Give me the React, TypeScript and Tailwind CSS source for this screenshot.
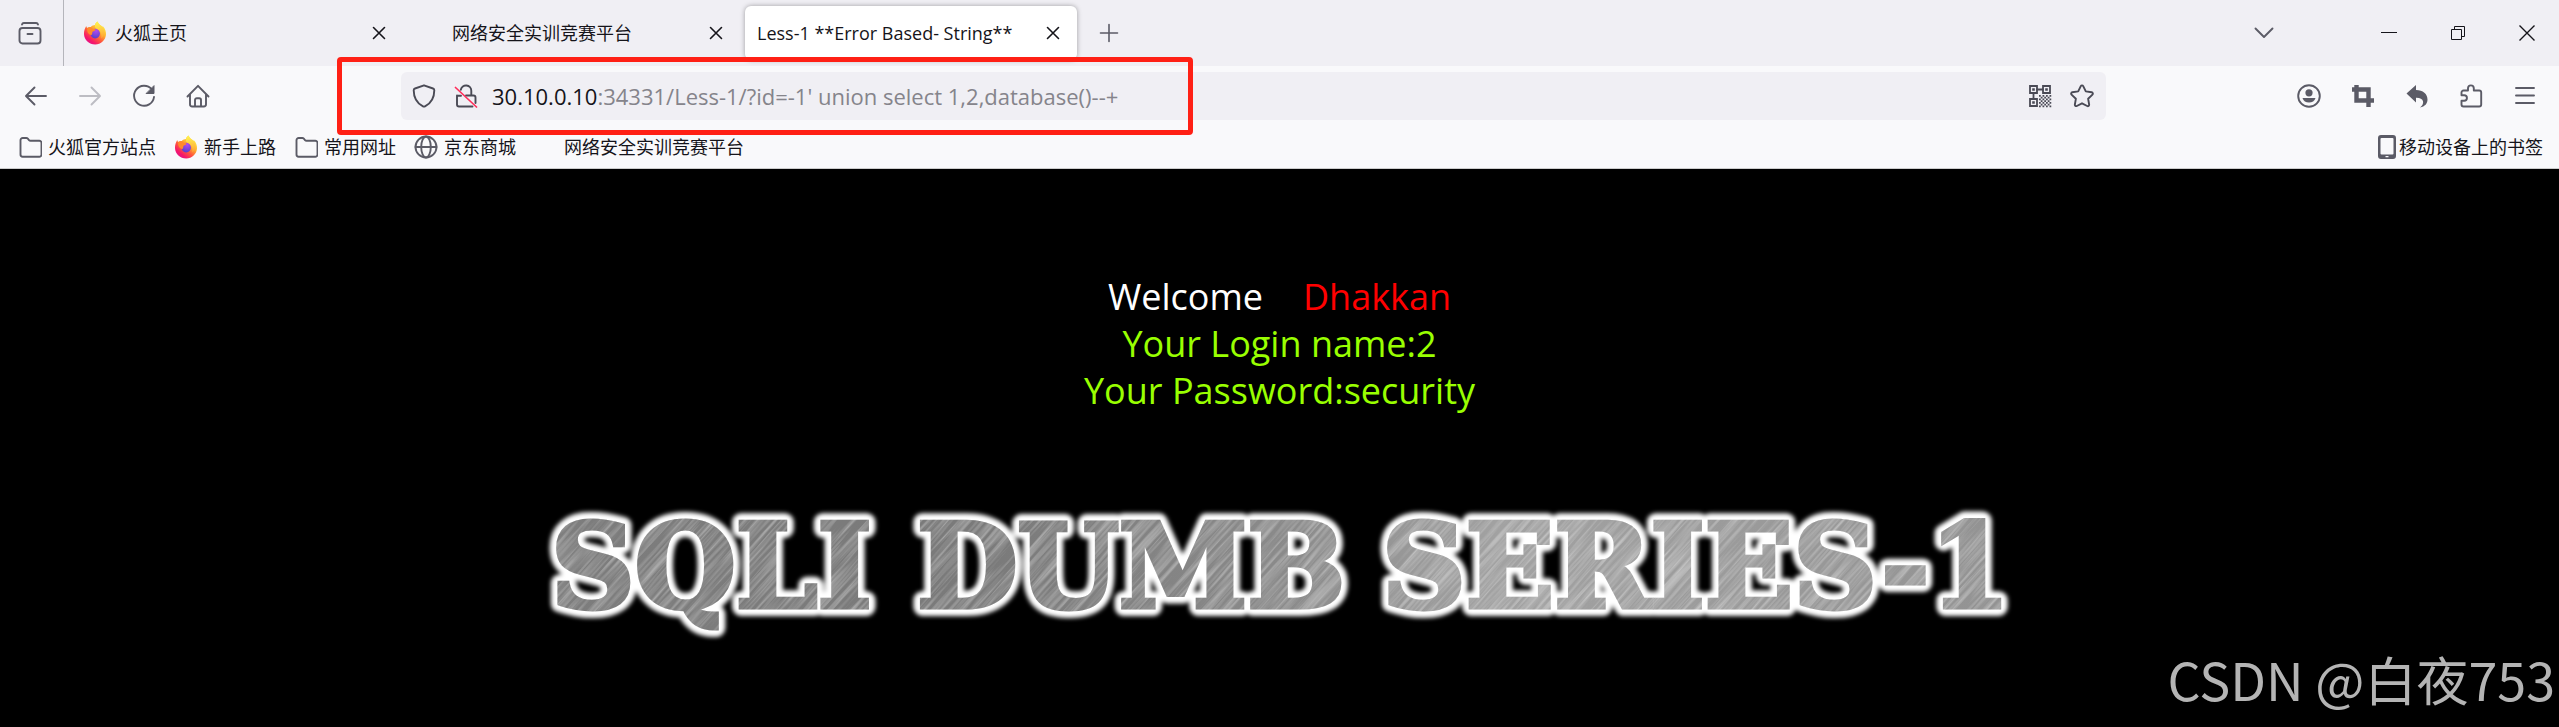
import { ReactNode } from 'react';

// Wrapper for the 24px line icons of the browser chrome
interface IconProps {
    children: ReactNode;
    className?: string;
}

const Icon: React.FC<IconProps> = ({ children, className = 'text-[#5b5b66]' }) => (
    <svg
        viewBox="0 0 24 24"
        className={`size-6 shrink-0 ${className}`}
        fill="none"
        stroke="currentColor"
        strokeWidth="1.9"
        strokeLinecap="round"
        strokeLinejoin="round"
        aria-hidden="true"
    >
        {children}
    </svg>
);

const FirefoxLogo = () => (
    <svg viewBox="0 0 24 24" className="size-6 shrink-0" aria-hidden="true">
        <defs>
            <linearGradient id="fx-body" x1="0.85" y1="0.1" x2="0.2" y2="0.95">
                <stop offset="0" stopColor="#fff04a" />
                <stop offset="0.35" stopColor="#ffb02e" />
                <stop offset="0.6" stopColor="#ff5a3c" />
                <stop offset="0.85" stopColor="#f5156c" />
                <stop offset="1" stopColor="#e31587" />
            </linearGradient>
            <linearGradient id="fx-flame" x1="0.5" y1="0" x2="0.6" y2="1">
                <stop offset="0" stopColor="#fff44f" />
                <stop offset="1" stopColor="#ffa436" />
            </linearGradient>
            <radialGradient id="fx-globe" cx="0.6" cy="0.2" r="0.9">
                <stop offset="0" stopColor="#b24bf0" />
                <stop offset="1" stopColor="#4a3fc8" />
            </radialGradient>
        </defs>
        <path
            fill="url(#fx-body)"
            d="M3.2 5.1c.3 1 .6 1.500 1 1.900C5.200 6.300 6.500 5.900 7.800 6 9 4.600 10.500 4.200 12 4.100c.2-1.600 1.200-3 2.600-3.700.5 1.900 2.100 3 3.600 4.400.4.400.8.800 1.100 1.200l.4-1c2.600 2.400 3.500 5.800 3.300 8.600C22.600 19.200 18 23.500 12.200 23.500 6.200 23.500 1.200 19 1 13c-.1-2.900.8-5.400 2.200-7.900z"
        />
        <circle cx="12.200" cy="12.600" r="4.800" fill="url(#fx-globe)" />
        <path
            fill="url(#fx-flame)"
            d="M12.100 4.100C12.200 2.500 13.200 1.100 14.600.4c.5 1.900 2.100 3 3.600 4.400 2 1.900 3 4.500 2.700 7.600-.3 2.300-1.300 4-2.700 5 .6-2.900.3-5.600-1.500-7.500-1.200-1.300-2.800-1.800-4.100-2.900-.7-.7-.8-1.700-.5-2.900z"
        />
        <path fill="#ff8a2b" d="M4.200 7.100C6 6 8.200 6 9.600 7.800c1.200.1 2.300.2 3 .6-.2 1.300-1.800 1.700-3 2.300-.7 1 .2 2.600-1.400 3.400-2.800-.6-4.600-3.400-4-7z" />
    </svg>
);

const FolderIcon = () => (
    <Icon>
        <path d="M2.500 19.500V5.200A2.200 2.200 0 0 1 4.700 3h3.600a2 2 0 0 1 1.500.7l1.200 1.400a2 2 0 0 0 1.500.7h8.800a2.200 2.200 0 0 1 2.200 2.200v11.500a2.200 2.200 0 0 1-2.200 2.200H4.700a2.200 2.200 0 0 1-2.200-2.200z" />
    </Icon>
);

const GlobeIcon = () => (
    <Icon>
        <circle cx="12" cy="12" r="10.500" />
        <ellipse cx="12" cy="12" rx="4.800" ry="10.500" />
        <path d="M1.500 12h21" />
    </Icon>
);

// Small 7x7 raster for the lower right part of the QR icon
const qrCells = ['1010101', '0101010', '1010101', '0101010', '1010101', '0101010', '1010101'];

const QrIcon = () => (
    <Icon className="text-[#4a4a55]">
        <g strokeLinejoin="miter" strokeWidth="1.800">
            <path d="M2 2h7v7H2zM15 2h7v7h-7zM2 15h7v7H2z" />
            <path d="M9 5.500h6M5.500 9v6" />
        </g>
        <g fill="currentColor" stroke="none">
            <path d="M4.200 4.200h2.600v2.600H4.200zM17.200 4.200h2.600v2.600h-2.600zM4.200 17.200h2.600v2.600H4.200z" />
            {qrCells.map((row, y) =>
                row.split('').map((cell, x) =>
                    cell === '1' ? <rect key={`${x}-${y}`} x={11 + x * 1.75} y={11 + y * 1.75} width="1.75" height="1.75" /> : null
                )
            )}
        </g>
    </Icon>
);

const CloseGlyph = () => (
    <Icon className="text-[#15141a]">
        <path d="M6.500 6.500l11 11M17.500 6.500l-11 11" strokeWidth="1.600" />
    </Icon>
);

interface TabProps {
    title: string;
    icon?: ReactNode;
    active?: boolean;
}

const Tab: React.FC<TabProps> = ({ title, icon, active }) => (
    <div
        className={`flex h-[54px] w-[332px] shrink-0 items-center rounded-md px-3 ${
            active ? 'bg-white shadow-[0_0_5px_rgba(0,0,0,0.35)]' : ''
        }`}
    >
        {icon && <span className="mr-2 size-6 shrink-0">{icon}</span>}
        <button className="min-w-0 flex-1 truncate text-left">{title}</button>
        <button aria-label={`关闭 ${title}`}>
            <CloseGlyph />
        </button>
    </div>
);

interface ToolButtonProps {
    label: string;
    children: ReactNode;
}

const ToolButton: React.FC<ToolButtonProps> = ({ label, children }) => (
    <button aria-label={label} className="flex h-12 w-[54px] items-center justify-center">
        {children}
    </button>
);

interface BookmarkProps {
    title: string;
    icon?: ReactNode;
}

const Bookmark: React.FC<BookmarkProps> = ({ title, icon }) => (
    <a href="#" className="flex items-center gap-1.5">
        <span className="size-6 shrink-0">{icon}</span>
        {title}
    </a>
);

const bannerWords = [
    { text: 'SQLI', x: 551 },
    { text: 'DUMB', x: 917 },
    { text: 'SERIES-1', x: 1382 },
];

const BannerText = () => (
    <>
        {bannerWords.map((word) => (
            <text key={word.text} x={word.x} y="608">
                {word.text}
            </text>
        ))}
    </>
);

// Brushed metal lettering with a white halo
const Banner = () => (
    <svg
        viewBox="530 500 1500 150"
        className="w-[1500px] max-w-full font-['DejaVu_Serif',serif] text-[116px] font-bold"
        role="img"
        aria-label="SQLI DUMB SERIES-1"
    >
        <defs>
            <linearGradient id="metal" gradientUnits="userSpaceOnUse" x1="540" y1="0" x2="2020" y2="0">
                <stop offset="0" stopColor="#7d7d7d" />
                <stop offset="0.3" stopColor="#7a7a7a" />
                <stop offset="0.5" stopColor="#8a8a8a" />
                <stop offset="0.65" stopColor="#a2a2a2" />
                <stop offset="1" stopColor="#929292" />
            </linearGradient>
            <filter id="brush" x="0" y="0" width="100%" height="100%">
                <feTurbulence type="fractalNoise" baseFrequency="0.012 0.35" numOctaves="3" seed="4" />
                <feColorMatrix values="0 0 0 0 1  0 0 0 0 1  0 0 0 0 1  0.8 0 0 0 -0.3" />
            </filter>
            <filter id="halo" x="-5%" y="-30%" width="110%" height="160%">
                <feGaussianBlur stdDeviation="2" />
            </filter>
            <mask id="letters" maskUnits="userSpaceOnUse" x="530" y="500" width="1500" height="150">
                <g fill="#fff" stroke="#fff" strokeWidth="5">
                    <BannerText />
                </g>
            </mask>
        </defs>
        <g fill="#fff" stroke="#fff" strokeWidth="18" strokeLinejoin="round" filter="url(#halo)">
            <BannerText />
        </g>
        <g mask="url(#letters)">
            <rect x="530" y="500" width="1500" height="150" fill="url(#metal)" />
            <g transform="rotate(-48 1280 575)">
                <rect x="600" y="-50" width="1360" height="1250" filter="url(#brush)" />
            </g>
        </g>
    </svg>
);

export default function App() {
    return (
        <div className="relative flex min-h-screen flex-col bg-black font-['Open_Sans','Noto_Sans_CJK_SC',sans-serif] text-[18px] leading-6 text-[#15141a]">
            {/* Tab strip */}
            <header className="flex h-[66px] items-center bg-[#f0eff4]">
                <div className="flex h-full w-16 items-center justify-center border-r border-[#b5b5bb]">
                    <button aria-label="最近浏览" className="pr-1">
                        <Icon>
                            <rect x="1.500" y="7" width="21" height="15.500" rx="3" />
                            <path d="M4 3.500a2 2 0 0 1 2-1.500h12a2 2 0 0 1 2 1.500M9.500 13h5" />
                        </Icon>
                    </button>
                </div>
                <div className="ml-[7px] flex items-center gap-[5px]">
                    <Tab title="火狐主页" icon={<FirefoxLogo />} />
                    <Tab title="网络安全实训竞赛平台" icon={<span />} />
                    <Tab title="Less-1 **Error Based- String**" active />
                    <ToolButton label="新建标签页">
                        <Icon>
                            <path d="M12 3.500v17M3.500 12h17" strokeWidth="1.600" />
                        </Icon>
                    </ToolButton>
                </div>
                <div className="ml-auto mr-[66px]">
                    <ToolButton label="列出所有标签页">
                        <Icon>
                            <path d="M3.500 7.500l8.500 8.500 8.500-8.500" />
                        </Icon>
                    </ToolButton>
                </div>
                <div className="flex gap-[5px]">
                    <button aria-label="最小化" className="flex h-12 w-16 items-center justify-center">
                        <svg viewBox="0 0 16 16" className="size-4" stroke="currentColor" aria-hidden="true">
                            <path d="M0 7.500h16" />
                        </svg>
                    </button>
                    <button aria-label="还原" className="flex h-12 w-16 items-center justify-center">
                        <svg viewBox="0 0 16 16" className="size-4" fill="none" stroke="currentColor" aria-hidden="true">
                            <path d="M1.500 4.500h10v10h-10zM4.500 4.500v-3h10v10h-3" />
                        </svg>
                    </button>
                    <button aria-label="关闭" className="flex h-12 w-16 items-center justify-center">
                        <svg viewBox="0 0 16 16" className="size-4" stroke="currentColor" strokeWidth="1.400" aria-hidden="true">
                            <path d="M.5.5l15 15M15.500.5l-15 15" />
                        </svg>
                    </button>
                </div>
            </header>

            {/* Navigation bar */}
            <nav className="flex h-[60px] items-center bg-[#f9f9fb] pl-[9px] pr-[7px]">
                <ToolButton label="后退">
                    <Icon>
                        <path d="M22 12H2.500M10.500 3.500L2 12l8.500 8.500" />
                    </Icon>
                </ToolButton>
                <ToolButton label="前进">
                    <Icon className="text-[#bdbdc3]">
                        <path d="M2 12h19.500M13.500 3.500L22 12l-8.500 8.500" />
                    </Icon>
                </ToolButton>
                <ToolButton label="刷新">
                    <Icon>
                        <path d="M19.800 5.400A10 10 0 1 0 22 13" />
                        <path d="M22 2v7.500h-7.500z" fill="currentColor" strokeWidth="1" />
                    </Icon>
                </ToolButton>
                <ToolButton label="主页">
                    <Icon>
                        <path d="M1.500 12.500L12 1.800l10.500 10.700M4 10.500v9.800A2.200 2.200 0 0 0 6.200 22.500h11.600a2.200 2.200 0 0 0 2.200-2.200v-9.800" />
                        <path d="M9 22v-6a1.800 1.800 0 0 1 1.800-1.800h2.400A1.800 1.800 0 0 1 15 16v6" />
                    </Icon>
                </ToolButton>

                <div className="mx-44 flex h-12 min-w-0 flex-1 items-center rounded-md bg-[#f0eff4] pl-[11px] pr-3">
                    <button aria-label="跟踪保护">
                        <Icon className="text-[#4a4a55]">
                            <path d="M12 1.300l9 3.200c.9.300 1.300.9 1.300 1.700 0 7-3.200 13-9.300 16.200a2.200 2.200 0 0 1-2 0C4.900 19.200 1.700 13.200 1.700 6.200c0-.8.400-1.400 1.300-1.700z" />
                        </Icon>
                    </button>
                    <button aria-label="连接不安全" className="ml-[18px]">
                        <Icon className="text-[#4a4a55]">
                            <path d="M6.800 5.800A5.300 5.300 0 0 1 17.300 6.800v4M3 11.500v9a2 2 0 0 0 2 2h13.500M12 11.500h7.500a2 2 0 0 1 2 2V19M3 11.800h4" />
                            <path d="M1.500 3.500l21 19.500" stroke="#ff2f5b" strokeWidth="1.700" />
                        </Icon>
                    </button>
                    <label className="ml-[14px] flex min-w-0 flex-1 items-center text-[22px] leading-8">
                        30.10.0.10
                        <input
                            aria-label="地址"
                            className="min-w-0 flex-1 bg-transparent text-[#85848b] outline-none"
                            defaultValue=":34331/Less-1/?id=-1' union select 1,2,database()--+"
                        />
                    </label>
                    <button aria-label="二维码">
                        <QrIcon />
                    </button>
                    <button aria-label="添加书签" className="ml-[18px]">
                        <Icon className="text-[#4a4a55]">
                            <path d="M10.800 2.100a1.350 1.350 0 0 1 2.400 0l2.600 5.300 5.900.9a1.350 1.350 0 0 1 .75 2.300l-4.300 4.200 1 5.800a1.350 1.350 0 0 1-1.950 1.400L12 19.300 6.800 22a1.350 1.350 0 0 1-1.950-1.400l1-5.800-4.300-4.200A1.350 1.350 0 0 1 2.300 8.300l5.900-.9z" />
                        </Icon>
                    </button>
                </div>

                <ToolButton label="账户">
                    <Icon>
                        <circle cx="12" cy="12" r="10.800" />
                        <circle cx="12" cy="8.800" r="3.600" fill="currentColor" stroke="none" />
                        <path d="M5.500 14h13c-.8 3-3.400 4.600-6.500 4.600S6.300 17 5.500 14z" fill="currentColor" stroke="none" />
                    </Icon>
                </ToolButton>
                <ToolButton label="截图">
                    <Icon>
                        <path d="M5.500 1v15.500H23M1 5.500h16.500V23" strokeWidth="4.400" strokeLinecap="butt" strokeLinejoin="miter" />
                    </Icon>
                </ToolButton>
                <ToolButton label="撤销">
                    <Icon>
                        <path
                            d="M1.500 9.500L11 1v5c7 0 11.500 4 11.500 9.500 0 4-2.500 7-7.500 8 2.500-2 3.500-4 3-6.200-.5-2.300-3-3.600-7-3.500v4.700z"
                            fill="currentColor"
                            stroke="none"
                        />
                    </Icon>
                </ToolButton>
                <ToolButton label="扩展">
                    <Icon>
                        <path d="M9 6.500V4.300a2.900 2.900 0 0 1 5.800 0v2.200h5.400a2 2 0 0 1 2 2v12a2 2 0 0 1-2 2H4.500a2 2 0 0 1-2-2v-3.700h2.700a2.700 2.700 0 0 0 0-5.500H2.500V8.500a2 2 0 0 1 2-2z" />
                    </Icon>
                </ToolButton>
                <ToolButton label="菜单">
                    <Icon>
                        <path d="M3 4h18M3 11.500h18M3 19h18" />
                    </Icon>
                </ToolButton>
            </nav>

            {/* Bookmarks */}
            <div className="flex h-[43px] items-center gap-[18px] border-b border-[#cccccc] bg-[#f9f9fb] pl-[18px] pr-4">
                <Bookmark title="火狐官方站点" icon={<FolderIcon />} />
                <Bookmark title="新手上路" icon={<FirefoxLogo />} />
                <Bookmark title="常用网址" icon={<FolderIcon />} />
                <Bookmark title="京东商城" icon={<GlobeIcon />} />
                <Bookmark title="网络安全实训竞赛平台" />
                <a href="#" className="ml-auto flex items-center gap-[3px]">
                    <svg viewBox="0 0 18 24" className="h-6 w-[18px] text-[#5b5b66]" aria-hidden="true">
                        <path
                            fill="currentColor"
                            fillRule="evenodd"
                            d="M3 0h12a3 3 0 0 1 3 3v18a3 3 0 0 1-3 3H3a3 3 0 0 1-3-3V3a3 3 0 0 1 3-3zm.5 3a1 1 0 0 0-1 1v14.500a1 1 0 0 0 1 1h11a1 1 0 0 0 1-1V4a1 1 0 0 0-1-1zM7.500 21v1.200h3V21z"
                        />
                    </svg>
                    移动设备上的书签
                </a>
            </div>

            {/* Page */}
            <main className="flex flex-col items-center pt-[104px] text-center text-[36px] leading-[47px] text-[#99ff00]">
                <p className="flex gap-10">
                    <span className="text-white">Welcome</span>
                    <span className="text-[#ff0000]">Dhakkan</span>
                </p>
                <p>Your Login name:2</p>
                <p className="mb-[85px]">Your Password:security</p>
                <Banner />
            </main>

            <div className="pointer-events-none absolute left-[337px] top-[57px] h-[78px] w-[856px] rounded border-[5px] border-[#ff2015]" />
            <div className="absolute bottom-[23px] right-1 font-['Noto_Sans_CJK_SC',sans-serif] text-[52px] leading-[50px] text-[#b4b4b4]">
                CSDN @白夜753
            </div>
        </div>
    );
}
